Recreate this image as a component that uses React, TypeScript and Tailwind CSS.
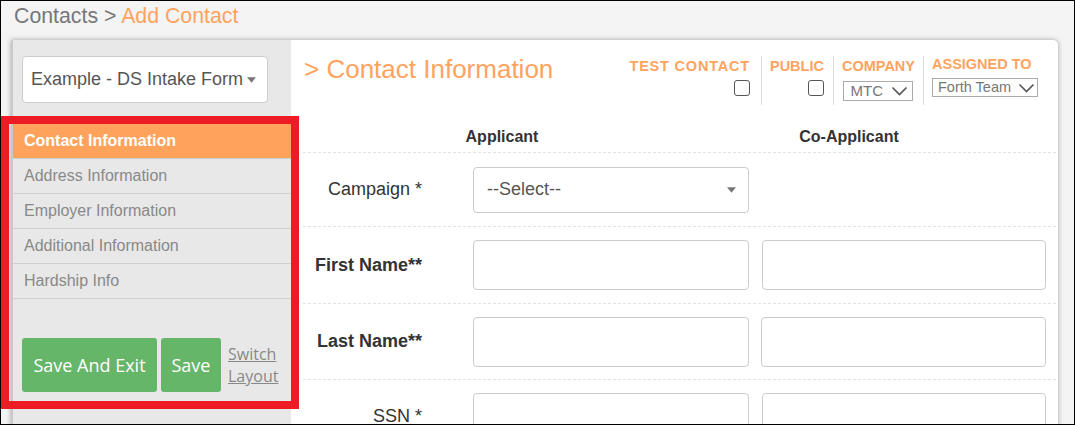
import React from "react";

const navItems = [
  "Contact Information",
  "Address Information",
  "Employer Information",
  "Additional Information",
  "Hardship Info",
];

const Chevron = ({ className }: { className?: string }) => (
  <svg viewBox="0 0 16 10" className={className} fill="none" stroke="currentColor" strokeWidth="1.6">
    <path d="M1 1.5 L8 8.5 L15 1.5" />
  </svg>
);

const Caret = () => (
  <svg viewBox="0 0 10 6" className="w-[9px] h-[6px] text-[#777]" fill="currentColor">
    <path d="M0 0 H10 L5 6 Z" />
  </svg>
);

const Checkbox = () => (
  <div className="w-[16px] h-[16px] border border-[#555] rounded-[3px] bg-white" />
);

const TextBox = ({ w }: { w: string }) => (
  <div className={`${w} h-[50px] border border-[#ccc] rounded-[4px] bg-white`} />
);

const Sidebar: React.FC = () => (
  <aside className="w-[278px] shrink-0 bg-[#e8e8e8] pt-[16px]">
    <div className="ml-[9px] w-[246px] h-[47px] bg-white border border-[#ccc] rounded-[4px] flex items-center justify-between pl-[8px] pr-[11px] text-[18px] text-[#555]">
      <span>Example - DS Intake Form</span>
      <Caret />
    </div>
    <nav className="mt-[21px]">
      {navItems.map((item, i) => (
        <div
          key={item}
          className={
            i === 0
              ? "h-[35px] pl-[11px] flex items-center bg-[#ffa35c] text-white font-bold text-[16px] border-b border-[#cfcfcf]"
              : "h-[35px] pl-[11px] flex items-center text-[#888] text-[16px] border-b border-[#cfcfcf]"
          }
        >
          {item}
        </div>
      ))}
    </nav>
    <div className="mt-[39px] ml-[9px] flex items-center gap-[4px] font-['Open_Sans',sans-serif]">
      <button className="w-[135px] h-[54px] rounded-[3px] bg-[#66b66a] text-white text-[18px]">Save And Exit</button>
      <button className="w-[60px] h-[54px] rounded-[3px] bg-[#66b66a] text-white text-[18px]">Save</button>
      <a className="ml-[3px] text-[16px] leading-[22px] text-[#888] underline">
        Switch
        <br />
        Layout
      </a>
    </div>
  </aside>
);

const HeaderFields: React.FC = () => (
  <div className="flex items-start pt-[16px] pr-[20px] text-[14.5px] font-bold text-[#ffa35f] uppercase">
    <div className="flex flex-col items-end pr-[11px] pt-[2px] h-[49px]">
      <span className="leading-[17px] tracking-[0.8px]">Test Contact</span>
      <div className="mt-[5px]"><Checkbox /></div>
    </div>
    <div className="flex flex-col items-end border-l border-[#ddd] pl-[8px] pr-[9px] pt-[2px] h-[49px]">
      <span className="leading-[17px]">Public</span>
      <div className="mt-[5px]"><Checkbox /></div>
    </div>
    <div className="flex flex-col items-center border-l border-[#ddd] pl-[8px] pr-[8px] pt-[2px] h-[49px]">
      <span className="leading-[17px]">Company</span>
      <div className="mt-[6px] w-[70px] h-[20px] border border-[#aaa] flex items-center justify-between pl-[6px] pr-[4px] font-normal normal-case text-[15px] text-[#777]">
        <span>MTC</span>
        <Chevron className="w-[17px] h-[10px] text-[#555]" />
      </div>
    </div>
    <div className="flex flex-col items-start border-l border-[#ddd] pl-[8px] h-[49px]">
      <span className="leading-[17px]">Assigned To</span>
      <div className="mt-[5px] w-[106px] h-[19px] border border-[#aaa] flex items-center justify-between pl-[5px] pr-[2px] font-normal normal-case text-[14.5px] text-[#777]">
        <span>Forth Team</span>
        <Chevron className="w-[17px] h-[10px] text-[#555]" />
      </div>
    </div>
  </div>
);

const rowClass = "grid grid-cols-[170px_289px_284px] items-center border-t border-dashed border-[#e2e2e2]";

export default function App() {
  return (
    <div className="relative w-[1075px] h-[425px] overflow-hidden border border-black bg-[#f4f4f4] font-['Liberation_Sans',Arial,sans-serif]">
      <div className="h-[39px] pl-[13px] pt-[3px] text-[21.3px] leading-[25px]">
        <span className="text-[#777]">Contacts &gt; </span>
        <span className="text-[#ffa35f]">Add Contact</span>
      </div>

      <div className="ml-[10px] w-[1047px] h-[400px] flex bg-white border-l-2 border-[#c9c9c9] rounded-tr-[5px] shadow-[0_0_5px_rgba(0,0,0,0.35)]">
        <Sidebar />

        <main className="flex-1">
          <div className="h-[72px] flex justify-between">
            <h1 className="pl-[13px] pt-[14px] text-[26px] leading-[30px] text-[#ffa35f]">&gt; Contact Information</h1>
            <HeaderFields />
          </div>

          <div className="pl-[12px] pr-[2px]">
            <div className="h-[40px] flex pt-[13px] text-[16px] font-bold text-[#333]">
              <div className="w-[398px] text-center">Applicant</div>
              <div className="w-[296px] text-center">Co-Applicant</div>
            </div>

            <div className={`${rowClass} h-[74px]`}>
              <label className="text-right pr-[51px] text-[18px] text-[#333]">Campaign *</label>
              <div className="w-[276px] h-[46px] border border-[#ccc] rounded-[4px] bg-white flex items-center justify-between pl-[13px] pr-[12px] text-[18px] text-[#555]">
                <span>--Select--</span>
                <Caret />
              </div>
              <div />
            </div>

            <div className={`${rowClass} h-[77px]`}>
              <label className="text-right pr-[51px] text-[18px] font-bold text-[#333]">First Name**</label>
              <TextBox w="w-[276px]" />
              <TextBox w="w-[284px]" />
            </div>

            <div className={`${rowClass} h-[76px]`}>
              <label className="text-right pr-[51px] text-[18px] font-bold text-[#333]">Last Name**</label>
              <TextBox w="w-[276px]" />
              <TextBox w="w-[285px] -ml-[1px]" />
            </div>

            <div className={`${rowClass} h-[76px] items-start pt-[13px]`}>
              <label className="text-right pr-[51px] pt-[10px] text-[18px] text-[#333]">SSN *</label>
              <TextBox w="w-[276px]" />
              <TextBox w="w-[284px]" />
            </div>
          </div>
        </main>
      </div>

      {/* highlight frame around the section nav */}
      <div className="absolute left-0 top-[115px] w-[298px] h-[293px] border-[8px] border-[#ed1c24] pointer-events-none" />
    </div>
  );
}
